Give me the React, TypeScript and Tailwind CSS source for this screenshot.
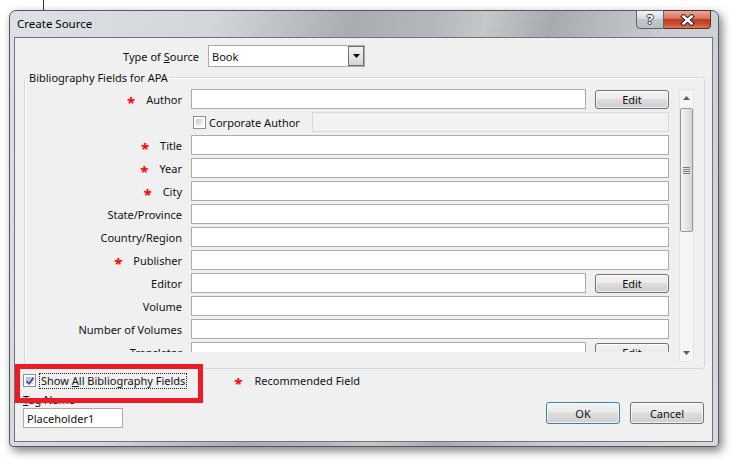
import React from 'react';

type Field = { label: string; star?: boolean; edit?: boolean; corporate?: boolean };

const fields: Field[] = [
    { label: 'Author', star: true, edit: true },
    { label: '', corporate: true },
    { label: 'Title', star: true },
    { label: 'Year', star: true },
    { label: 'City', star: true },
    { label: 'State/Province' },
    { label: 'Country/Region' },
    { label: 'Publisher', star: true },
    { label: 'Editor', edit: true },
    { label: 'Volume' },
    { label: 'Number of Volumes' },
    { label: 'Translator', edit: true },
];

const Star = () => (
    <span className="mr-[11px] inline-block translate-y-[3px] text-[15px] font-bold leading-none text-[#ff0000]">*</span>
);

const Checkbox = ({ checked }: { checked?: boolean }) => (
    <div className="relative h-[13px] w-[13px] shrink-0 border border-[#8e8f8f] bg-white p-[2px]">
        <div
            className={
                checked
                    ? 'h-full w-full bg-[linear-gradient(135deg,#aeb8cb,#dfe4ec)]'
                    : 'h-full w-full bg-[linear-gradient(135deg,#cbcbcb,#f7f7f7)]'
            }
        />
        {checked && (
            <svg className="absolute left-[1px] top-[1px]" width="10" height="10" viewBox="0 0 10 10">
                <path d="M1.5 5 L4 7.8 L8.6 1.6" fill="none" stroke="#3d5a98" strokeWidth="1.8" />
            </svg>
        )}
    </div>
);

const WinButton = ({ children, className }: { children: React.ReactNode; className: string }) => (
    <div
        className={`flex items-center justify-center rounded-[3px] border bg-[linear-gradient(#f2f2f2,#ebebeb_45%,#dddddd_50%,#cfcfcf)] shadow-[inset_0_0_0_1px_rgba(255,255,255,0.7)] ${className}`}
    >
        {children}
    </div>
);

const Arrow = ({ down }: { down?: boolean }) => (
    <svg width="7" height="4" viewBox="0 0 7 4">
        <path d={down ? 'M0 0 H7 L3.5 4 Z' : 'M0 4 H7 L3.5 0 Z'} fill="#5e5e5e" />
    </svg>
);

const Scrollbar = () => (
    <div className="mt-[11px] flex h-[273px] w-[15px] flex-col items-center border border-[#e4e4e4] bg-[#f5f5f5]">
        <div className="flex h-[16px] items-center">
            <Arrow />
        </div>
        <div className="mt-[2px] flex h-[124px] w-[13px] items-center justify-center rounded-[2px] border border-[#979797] bg-[linear-gradient(to_right,#f4f4f4,#e6e6e6_50%,#d4d4d4)]">
            <svg width="7" height="7" viewBox="0 0 7 7">
                <path d="M0 0.5 H7 M0 2.5 H7 M0 4.5 H7 M0 6.5 H7" stroke="#7a7a7a" strokeWidth="1" />
            </svg>
        </div>
        <div className="flex-1" />
        <div className="mb-[5px] flex h-[6px] items-center">
            <Arrow down />
        </div>
    </div>
);

const FieldRow = ({ field }: { field: Field }) => {
    if (field.corporate) {
        return (
            <div className="mb-[3px] flex h-[20px] items-center">
                <div className="w-[157px]" />
                <div className="ml-[9px] flex w-[478px] items-center">
                    <div className="ml-[2px]">
                        <Checkbox />
                    </div>
                    <span className="ml-[3px]">Corporate Author</span>
                    <div className="ml-auto h-[20px] w-[357px] border border-[#d9d9d9] bg-[#f2f2f2]" />
                </div>
            </div>
        );
    }
    return (
        <div className="mb-[3px] flex h-[20px] items-center">
            <div className="flex w-[157px] items-center justify-end">
                {field.star && <Star />}
                <span>{field.label}</span>
            </div>
            <div className="ml-[9px] flex w-[478px] items-center">
                <div className={`h-[20px] border border-[#ababab] bg-white ${field.edit ? 'w-[395px]' : 'w-full'}`} />
                {field.edit && <WinButton className="ml-[9px] h-[19px] w-[74px] border-[#707070]">Edit</WinButton>}
            </div>
        </div>
    );
};

const App: React.FC = () => {
    return (
        <div className="relative h-[460px] w-[731px] overflow-hidden bg-white font-['Noto_Sans',sans-serif] text-[11px] leading-[15px] text-[#111]">
            {/* stray cursor line above the window */}
            <div className="absolute left-[43px] top-0 h-[10px] w-px bg-[#333]" />

            <div className="pl-[9px] pt-[10px]">
                <div className="flex h-[437px] w-[710px] flex-col rounded-t-[7px] rounded-b-[4px] border border-[#545a62] bg-[linear-gradient(105deg,#dde0e4_0%,#d2d5d9_25%,#a9adb2_42%,#b4b8bc_52%,#c4c7ca_58%,#a7abaf_66%,#c9ccd0_80%,#d7dadd_100%)] shadow-[3px_4px_10px_rgba(0,0,0,0.5)]">
                    {/* title bar */}
                    <div className="flex h-[26px] items-start">
                        <span className="ml-[7px] mt-[5px] text-[11.5px] text-[#000]">Create Source</span>
                        <div className="-mt-px ml-auto mr-[7px] flex">
                            <div className="flex h-[19px] w-[28px] items-center justify-center rounded-bl-[4px] border border-[#5f646b] bg-[linear-gradient(#f1f3f5,#d9dde2_45%,#c3c8ce_50%,#b9bec5)]">
                                <span className="text-[13px] font-bold leading-none text-white [text-shadow:-1px_0_#3c3c3c,1px_0_#3c3c3c,0_-1px_#3c3c3c,0_1px_#3c3c3c]">
                                    ?
                                </span>
                            </div>
                            <div className="flex h-[19px] w-[47px] items-center justify-center rounded-br-[4px] border border-l-0 border-[#5e2a20] bg-[linear-gradient(#e8a899,#d9735d_45%,#c43b21_50%,#c9492c_75%,#d9785b)]">
                                <svg width="15" height="12" viewBox="0 0 15 12">
                                    <path d="M3.5 2.5 L11.5 9.5 M11.5 2.5 L3.5 9.5" stroke="#2f2f2f" strokeWidth="4.6" strokeLinecap="square" />
                                    <path d="M3.5 2.5 L11.5 9.5 M11.5 2.5 L3.5 9.5" stroke="#ffffff" strokeWidth="2.4" strokeLinecap="square" />
                                </svg>
                            </div>
                        </div>
                    </div>

                    {/* client area */}
                    <div className="mb-[4px] ml-[4px] mr-[5px] flex-1 border border-[#6f747a] bg-[#f0f0f0]">
                        <div className="mt-[7px] flex items-center">
                            <div className="w-[184px] text-right">
                                Type of <span className="underline">S</span>ource
                            </div>
                            <div className="ml-[9px] flex h-[22px] w-[157px] items-center border border-[#ababab] bg-white">
                                <span className="pl-[3px]">Book</span>
                                <div className="ml-auto flex h-full w-[16px] items-center justify-center border border-[#707070] bg-[linear-gradient(#f2f2f2,#e6e6e6_50%,#d3d3d3)]">
                                    <svg width="7" height="4" viewBox="0 0 7 4">
                                        <path d="M0 0 H7 L3.5 4 Z" fill="#000" />
                                    </svg>
                                </div>
                            </div>
                        </div>

                        {/* group box */}
                        <div className="relative ml-[9px] mt-[10px] h-[292px] w-[681px] rounded-[3px] border border-[#d5d9dd] shadow-[inset_1px_1px_0_#ffffff]">
                            <span className="absolute -top-[8px] left-[3px] bg-[#f0f0f0] px-[1px]">Bibliography Fields for APA</span>
                            <div className="flex">
                                <div className="mt-[8px] h-[266px] w-[654px] overflow-hidden pt-[3px]">
                                    {fields.map((f, i) => (
                                        <FieldRow key={i} field={f} />
                                    ))}
                                </div>
                                <Scrollbar />
                            </div>
                        </div>

                        {/* bottom */}
                        <div className="pl-[8px] pr-[8px] pt-[3px]">
                            <div className="flex h-[17px] items-center">
                                <Checkbox checked />
                                <span className="ml-[3px] border border-dotted border-[#222] px-[1px] leading-[14px]">
                                    Show <span className="underline">A</span>ll Bibliography Fields
                                </span>
                                <div className="ml-[47px] flex items-center">
                                    <Star />
                                    <span className="ml-[1px]">Recommended Field</span>
                                </div>
                            </div>
                            <div className="flex items-start">
                                <div className="flex flex-col">
                                    <span className="mt-[4px] h-[14px] leading-[14px]">
                                        <span className="underline">T</span>ag Name
                                    </span>
                                    <div className="mt-[1px] flex h-[20px] w-[100px] items-center border border-[#ababab] bg-white pl-[3px]">
                                        Placeholder1
                                    </div>
                                </div>
                                <div className="ml-auto mt-[13px] flex gap-[10px]">
                                    <WinButton className="h-[22px] w-[74px] border-[#3c7fb1] shadow-[inset_0_0_0_1px_#b6e0f6]">OK</WinButton>
                                    <WinButton className="h-[22px] w-[74px] border-[#707070]">Cancel</WinButton>
                                </div>
                            </div>
                        </div>
                    </div>
                </div>
            </div>

            {/* red highlight annotation */}
            <div className="absolute left-[15px] top-[364px] h-[39px] w-[188px] border-[5px] border-[#ec1c24]" />
        </div>
    );
};

export default App;
